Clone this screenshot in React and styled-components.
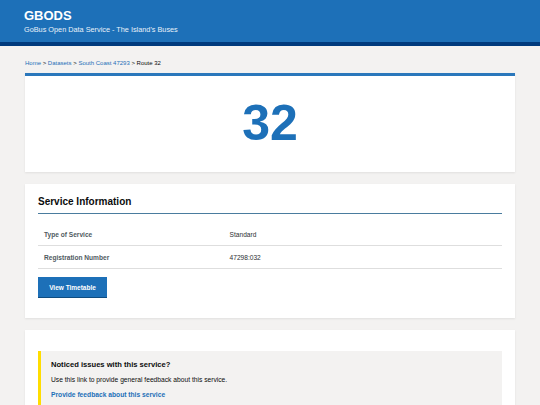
import React from 'react';
import styled, { createGlobalStyle } from 'styled-components';

const GlobalStyle = createGlobalStyle`
    body {
        margin: 0;
        background: #f3f2f1;
        font-family: 'Liberation Sans', Arial, sans-serif;
        color: #0b0c0c;
    }
`

const rows = [
    { label: 'Type of Service', value: 'Standard' },
    { label: 'Registration Number', value: '47298:032' },
];

const App = () => {
    return (
        <>
            <GlobalStyle />
            <Header>
                <Brand>GBODS</Brand>
                <Tagline>GoBus Open Data Service - The Island's Buses</Tagline>
            </Header>
            <Main>
                <Breadcrumb>
                    <Crumb href="#">Home</Crumb> &gt; <Crumb href="#">Datasets</Crumb> &gt;{' '}
                    <Crumb href="#">South Coast 47293</Crumb> &gt; Route 32
                </Breadcrumb>
                <RouteCard>
                    <RouteNumber>32</RouteNumber>
                </RouteCard>
                <Card>
                    <SectionTitle>Service Information</SectionTitle>
                    <Table>
                        {rows.map((row) => (
                            <Row key={row.label}>
                                <Label>{row.label}</Label>
                                <Value>{row.value}</Value>
                            </Row>
                        ))}
                    </Table>
                    <Button>View Timetable</Button>
                </Card>
                <Card $top="21px">
                    <Feedback>
                        <FeedbackTitle>Noticed issues with this service?</FeedbackTitle>
                        <FeedbackText>Use this link to provide general feedback about this service.</FeedbackText>
                        <FeedbackLink href="#">Provide feedback about this service</FeedbackLink>
                    </Feedback>
                </Card>
            </Main>
        </>
    );
};

const Header = styled.header`
    background: #1d70b8;
    border-bottom: 4px solid #003a7d;
    height: 46px;
    padding: 9px 24px 0;
    box-sizing: border-box;
    color: #fff;
`

const Brand = styled.div`
    font-size: 13px;
    font-weight: bold;
    line-height: 14px;
`

const Tagline = styled.div`
    font-size: 7.3px;
    line-height: 10px;
    margin-top: 2px;
    color: #e8f0f8;
`

const Main = styled.main`
    padding: 13px 25px 0;
    display: flex;
    flex-direction: column;
    gap: 12px;
`

const Breadcrumb = styled.nav`
    font-size: 6px;
    line-height: 8px;
    margin-bottom: -6px;
    color: #0b0c0c;
`

const Crumb = styled.a`
    color: #1d70b8;
    text-decoration: none;
`

const Card = styled.section`
    background: #fff;
    box-shadow: 0 1px 2px rgba(0, 0, 0, 0.08);
    padding: ${(p) => p.$top || '12px'} 13px 21px;
`

const RouteCard = styled(Card)`
    border-top: 3px solid #2a77bb;
    height: 96px;
    padding: 0;
    display: flex;
    align-items: center;
    justify-content: center;
`

const RouteNumber = styled.h1`
    margin: 0 0 3px;
    font-size: 50px;
    font-weight: bold;
    color: #1d70b8;
    line-height: 1;
`

const SectionTitle = styled.h2`
    margin: 0;
    font-size: 10px;
    line-height: 12px;
    padding-bottom: 5px;
    border-bottom: 1.5px solid #4a7c9e;
`

const Table = styled.div`
    margin-top: 9px;
`

const Row = styled.div`
    display: grid;
    grid-template-columns: 40% 1fr;
    height: 22px;
    align-items: center;
    border-bottom: 1px solid #dedede;
    font-size: 6.6px;
`

const Label = styled.div`
    padding-left: 6px;
    font-weight: bold;
    color: #505a5f;
`

const Value = styled.div`
    padding-left: 6px;
    color: #2b2f31;
`

const Button = styled.button`
    margin-top: 8px;
    width: 69px;
    height: 20px;
    border: 0;
    background: #1d70b8;
    color: #fff;
    font-family: 'Liberation Sans', Arial, sans-serif;
    font-size: 6.5px;
    font-weight: bold;
    box-shadow: 0 1px 0 #0f4c80;
    padding: 0;
`

const Feedback = styled.div`
    background: #f3f2f1;
    border-left: 3px solid #ffdd00;
    padding: 9px 10px 12px;
    display: flex;
    flex-direction: column;
`

const FeedbackTitle = styled.h3`
    margin: 0;
    font-size: 7.6px;
    line-height: 10px;
`

const FeedbackText = styled.p`
    margin: 5px 0 0;
    font-size: 6.7px;
    line-height: 9px;
`

const FeedbackLink = styled.a`
    margin-top: 6px;
    font-size: 6.7px;
    line-height: 9px;
    font-weight: bold;
    color: #1d70b8;
    text-decoration: none;
`

export default App;
